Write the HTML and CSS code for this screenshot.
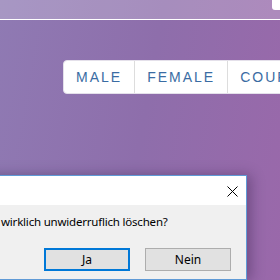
FILE: index.html
```html
<!DOCTYPE html>
<html lang="de">
  <head>
    <meta charset="UTF-8">
    <title>Profile</title>
    <link rel="stylesheet" href="styles.css">
  </head>
  <body>

    <div class="topbar">
      <div class="search"></div>
    </div>

    <div class="filters">
      <div class="group">
        <span class="tab">Male</span>
        <span class="tab">Female</span>
        <span class="tab">Cour</span>
      </div>
    </div>

    <div class="dialog">
      <div class="dlg-head">
        <span class="close">
          <svg width="11" height="11" viewBox="0 0 11 11"><path d="M0.5 0.5 L10.5 10.5 M10.5 0.5 L0.5 10.5" stroke="#000" stroke-width="1" fill="none"/></svg>
        </span>
      </div>
      <div class="dlg-body">
        <p class="msg">wirklich unwiderruflich löschen?</p>
        <div class="buttons">
          <button class="btn default">Ja</button>
          <button class="btn">Nein</button>
        </div>
      </div>
    </div>

  </body>
</html>
```

FILE: styles.css
```css
html, body {
  height: 100%;
}

body {
  margin: 0;
  overflow: hidden;
  font-family: "Liberation Sans", Arial, sans-serif;
  background: linear-gradient(100deg, #8f7ab3 0%, #8e6eab 50%, #9a68aa 100%);
}

.topbar {
  height: 19px;
  background: rgba(255, 255, 255, 0.22);
  border-bottom: 1px solid #fff;
  display: flex;
  justify-content: flex-end;
}

.search {
  width: 8px;
  height: 10px;
  background: #fff;
  border-bottom-left-radius: 3px;
}

.filters {
  padding: 40px 0 0 63px;
  display: flex;
}

.group {
  display: flex;
  background: #fff;
  border: 1px solid #e4e0ea;
  border-radius: 4px;
  white-space: nowrap;
}

.tab {
  padding: 8px 12px;
  line-height: 16px;
  font-size: 14px;
  letter-spacing: 2px;
  text-transform: uppercase;
  color: #3a6ca3;
  border-left: 1px solid #dddddd;
}

.tab:first-child {
  border-left: none;
}

.dialog {
  position: absolute;
  top: 175px;
  left: -40px;
  width: 285px;
  height: 103px;
  background: #f0f0f0;
  border: 1px solid #5f9ad6;
  box-shadow: 4px 0 12px rgba(40, 20, 60, 0.35);
  font-family: "Noto Sans", "Segoe UI", sans-serif;
  font-size: 12px;
  color: #000;
}

.dlg-head {
  height: 29px;
  background: #fff;
  display: flex;
  justify-content: flex-end;
}

.close {
  padding: 8px 8px 0 0;
}

.dlg-body {
  padding: 0 0 0 40px;
}

.msg {
  margin: 0;
  padding-top: 9px;
  line-height: 16px;
  font-size: 11.5px;
  letter-spacing: -0.2px;
}

.buttons {
  display: flex;
  gap: 15px;
  padding: 18px 0 0 43px;
}

.btn {
  width: 86px;
  height: 23px;
  margin: 0;
  padding: 0;
  font-family: inherit;
  font-size: 12px;
  color: #000;
  background: #e1e1e1;
  border: 1px solid #adadad;
}

.btn.default {
  border: 2px solid #0078d7;
}
```
